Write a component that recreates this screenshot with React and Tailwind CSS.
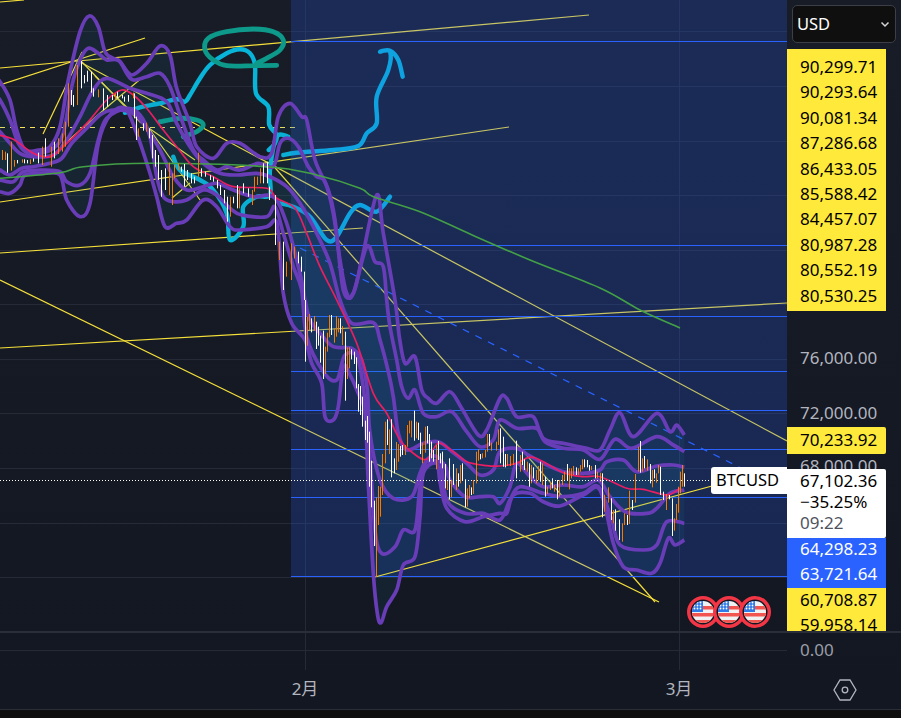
import React from "react";

// all chart data below was read off 3x crops, so each set keeps the crop origin it was read in
const crop = (ox, oy, pts) => pts.map(([x, y]) => [ox + x / 3, oy + y / 3]);
const A = (pts) => crop(0, 0, pts);
const B = (pts) => crop(280, 300, pts);
const C = (pts) => crop(500, 380, pts);

const smooth = (pts) => {
  let d = `M${pts[0][0].toFixed(1)} ${pts[0][1].toFixed(1)}`;
  for (let i = 0; i < pts.length - 1; i++) {
    const p0 = pts[i - 1] || pts[i];
    const p1 = pts[i];
    const p2 = pts[i + 1];
    const p3 = pts[i + 2] || p2;
    const c1 = [p1[0] + (p2[0] - p0[0]) / 6, p1[1] + (p2[1] - p0[1]) / 6];
    const c2 = [p2[0] - (p3[0] - p1[0]) / 6, p2[1] - (p3[1] - p1[1]) / 6];
    d += `C${c1[0].toFixed(1)} ${c1[1].toFixed(1)} ${c2[0].toFixed(1)} ${c2[1].toFixed(1)} ${p2[0].toFixed(1)} ${p2[1].toFixed(1)}`;
  }
  return d;
};

const u3 = [
  ...A([[-10, 240], [0, 245], [30, 300], [50, 390], [75, 450], [115, 450], [150, 440], [180, 380], [205, 240], [240, 95], [268, 48], [295, 80], [315, 155], [340, 175], [360, 185], [395, 225], [440, 190], [480, 138], [510, 165], [530, 265], [570, 370], [590, 440], [640, 475], [680, 430], [720, 430], [780, 470], [815, 460], [835, 350], [870, 310], [905, 350], [920, 360], [945, 480], [985, 570], [1005, 660], [1030, 870], [1060, 880], [1085, 780], [1130, 585], [1150, 700]]),
  ...B([[345, 0], [358, 110], [375, 190], [405, 170], [425, 270], [445, 295], [470, 310], [510, 275], [545, 325], [595, 405], [620, 390]]),
  ...C([[0, 55], [20, 55], [50, 110], [100, 110], [130, 175], [190, 190], [260, 205], [300, 210], [330, 150], [360, 98], [400, 170], [470, 100], [510, 155], [530, 135], [553, 165]]),
];
const u2 = [
  ...A([[-10, 295], [0, 300], [30, 360], [55, 430], [85, 460], [120, 460], [160, 445], [190, 400], [215, 260], [240, 180], [265, 145], [295, 160], [320, 180], [355, 180], [380, 220], [400, 240], [440, 230], [480, 220], [510, 260], [545, 360], [580, 450], [610, 480], [650, 510], [680, 500], [720, 510], [775, 490], [820, 500], [840, 430], [865, 415], [895, 440], [925, 500], [950, 530], [975, 545], [1000, 640], [1020, 780], [1040, 880], [1060, 880], [1100, 740], [1125, 785], [1150, 800]]),
  ...B([[320, 0], [330, 80], [350, 180], [365, 260], [385, 295], [405, 270], [430, 340], [470, 350], [515, 335], [560, 395], [600, 440], [640, 420]]),
  ...C([[0, 120], [50, 145], [110, 145], [135, 185], [190, 205], [250, 210], [300, 238], [345, 178], [395, 205], [470, 170], [520, 195], [553, 215]]),
];
const u1 = [
  ...A([[-10, 390], [0, 395], [30, 430], [60, 460], [100, 470], [160, 465], [200, 420], [240, 350], [280, 270], [320, 235], [390, 265], [440, 280], [500, 305], [530, 370], [570, 440], [610, 490], [660, 520], [710, 525], [770, 520], [810, 530], [860, 560], [900, 610], [950, 700], [990, 790], [1020, 900]]),
  ...B([[215, 70], [280, 68], [300, 120], [325, 215], [340, 290], [355, 400], [380, 450], [430, 430], [475, 425], [510, 450], [560, 490], [600, 525], [640, 510]]),
  ...C([[0, 215], [50, 205], [85, 225], [130, 250], [190, 275], [250, 280], [300, 270], [320, 245], [370, 240], [410, 275], [470, 258], [520, 255], [553, 262]]),
];
const l1 = [
  ...A([[-10, 505], [0, 510], [30, 525], [65, 505], [100, 500], [150, 490], [185, 475], [215, 430], [260, 385], [300, 345], [340, 330], [400, 340], [440, 385], [480, 450], [520, 530], [560, 570], [610, 560], [650, 550], [700, 570], [760, 590], [820, 590], [860, 670], [900, 820]]),
  ...B([[75, 0], [90, 60], [120, 100], [160, 140], [215, 145], [245, 180], [262, 270], [270, 400], [300, 540], [340, 595], [395, 590], [420, 520], [440, 485], [490, 490], [510, 540], [555, 590], [600, 590], [640, 590]]),
  ...C([[0, 370], [30, 320], [50, 250], [90, 290], [130, 320], [190, 315], [250, 320], [295, 300], [330, 350], [375, 395], [440, 400], [470, 385], [510, 340], [553, 330]]),
];
const l2 = [
  ...A([[-10, 535], [0, 540], [40, 545], [70, 515], [130, 510], [180, 515], [200, 545], [240, 555], [270, 520], [295, 420], [320, 355], [380, 325], [420, 345], [450, 410], [470, 530], [490, 590], [520, 605], [560, 600], [610, 570], [650, 585], [690, 625], [725, 645], [800, 650], [825, 620], [850, 700], [880, 800], [905, 870]]),
  ...B([[80, 110], [130, 215], [170, 240], [195, 165], [235, 180], [260, 350], [270, 470], [285, 690], [305, 760], [345, 740], [370, 690], [405, 690], [420, 560], [440, 480], [480, 480], [500, 600], [555, 640], [610, 640]]),
  ...C([[0, 420], [30, 360], [60, 320], [130, 340], [190, 350], [250, 340], [295, 320], [335, 420], [360, 495], [430, 510], [470, 495], [500, 425], [553, 430]]),
];
const l3 = [
  ...A([[-10, 570], [0, 575], [30, 580], [60, 555], [75, 525], [130, 520], [180, 525], [200, 600], [240, 650], [270, 610], [295, 430], [330, 345], [375, 325], [410, 400], [450, 520], [470, 590], [495, 680], [530, 670], [560, 660], [610, 600], [650, 620], [690, 680], [720, 690], [800, 680], [825, 660], [835, 700], [850, 880]]),
  ...B([[35, 70], [75, 120], [95, 190], [125, 250], [135, 350], [160, 360], [175, 320], [190, 200], [210, 225], [235, 280], [255, 340], [265, 550], [280, 820], [292, 940], [303, 968], [320, 920], [350, 870], [370, 795], [405, 770], [420, 650], [430, 520], [470, 490], [480, 545], [500, 625], [555, 665], [610, 650]]),
  ...C([[0, 400], [20, 400], [40, 345], [90, 340], [130, 365], [180, 378], [250, 345], [300, 330], [340, 490], [370, 560], [410, 570], [455, 580], [480, 550], [505, 475], [525, 495], [553, 480]]),
];

const red = [
  ...A([[-5, 405], [40, 418], [100, 460], [150, 470], [190, 440], [260, 370], [320, 300], [365, 270], [400, 285], [440, 325], [490, 390], [530, 440], [580, 500], [640, 530], [700, 560], [800, 565], [830, 595], [885, 625], [920, 700], [960, 800]]),
  ...B([[170, 0], [230, 130], [280, 280], [320, 340], [360, 420], [400, 460], [440, 478], [475, 430], [520, 455], [560, 485], [620, 497]]),
  ...C([[0, 258], [50, 250], [100, 232], [190, 278], [250, 290], [300, 290], [380, 325], [430, 328], [500, 345], [540, 325]]),
];
const green = [
  ...A([[0, 535], [180, 518], [250, 500], [450, 490], [800, 500], [950, 525], [1080, 565], [1120, 590], [1260, 635]]),
  [470, 234], [530, 260], [600, 288], [640, 310], [680, 328],
];
const cyanLines = [
  A([[375, 338], [420, 322], [470, 312], [530, 298], [555, 305], [570, 285], [600, 235], [630, 195], [680, 160], [720, 148], [750, 160], [765, 195], [768, 280], [805, 320], [808, 375], [830, 405], [825, 430], [806, 450]]),
  A([[850, 465], [890, 458], [1000, 450], [1075, 438], [1100, 400], [1130, 370], [1130, 290], [1165, 210], [1170, 155], [1140, 155], [1170, 152], [1195, 180], [1208, 230]]),
  A([[520, 470], [540, 510], [600, 540], [640, 570], [680, 640], [690, 720], [730, 680], [730, 620], [770, 590], [810, 585], [810, 510], [830, 410], [865, 410]]),
  A([[840, 610], [880, 620], [930, 650], [980, 720], [1010, 710], [1050, 640], [1080, 615], [1130, 635], [1170, 590]]),
];
const tealLines = [
  A([[830, 196], [765, 197], [680, 197], [640, 180], [615, 150], [625, 115], [680, 95], [760, 87], [820, 95], [850, 120], [840, 150], [800, 175], [770, 190]]),
  A([[480, 365], [540, 355], [590, 360], [610, 375], [590, 395], [550, 410]]),
];

const fib = [
  [[0, 68], [589, 15]],
  [[0, 2], [24, 0]],
  [[0, 85], [145, 38]],
  [[0, 202], [509, 127]],
  [[0, 253], [363, 228]],
  [[0, 348], [787, 303]],
  [[0, 280], [659, 602]],
  [[80, 62], [787, 441]],
  [[270, 162], [655, 602]],
  [[43, 134], [82, 52]],
  [[63, 145], [113, 102], [143, 77]],
  [[82, 62], [140, 122], [195, 160]],
  [[95, 76], [150, 130], [200, 200]],
  [[172, 198], [190, 183]],
];

const orange = "#f57c00";
// [x, top, bottom, 1 = orange]
const toBars = (ox, oy, rows) => rows.map(([x, a, b, o]) => [ox + x / 3, oy + a / 3, oy + b / 3, o]);
const bars = [
  ...toBars(0, 0, [[5, 450, 480, 1], [15, 455, 480, 1], [22, 460, 518], [32, 425, 512, 1], [42, 480, 500, 1], [50, 480, 490], [65, 478, 488, 1], [72, 478, 490], [80, 480, 490], [90, 478, 492, 1], [98, 475, 485], [115, 458, 490], [125, 440, 495, 1], [135, 415, 470], [152, 440, 500, 1], [162, 425, 475], [175, 415, 462, 1], [185, 400, 455, 1], [195, 365, 440, 1], [203, 250, 380, 1], [212, 270, 315], [220, 285, 320], [230, 195, 315, 1], [243, 183, 265], [252, 225, 250], [262, 212, 245], [272, 215, 278], [280, 265, 290], [295, 268, 292, 1], [310, 265, 330], [322, 285, 320], [335, 285, 300], [345, 280, 298, 1], [352, 275, 295], [365, 285, 295], [372, 290, 305], [385, 285, 305], [398, 278, 295, 1], [403, 280, 355], [408, 350, 420], [414, 385, 410, 1], [428, 370, 392], [438, 368, 395, 1], [446, 385, 415], [456, 405, 475], [465, 450, 500], [473, 465, 540], [483, 510, 590], [496, 505, 570], [507, 488, 585, 1], [516, 520, 615, 1], [522, 495, 535, 1], [534, 490, 510, 1], [543, 500, 515], [552, 492, 560], [562, 510, 540], [572, 520, 550], [582, 530, 550], [595, 458, 530, 1], [603, 505, 530], [615, 515, 530], [630, 525, 540], [640, 530, 545], [650, 540, 565], [660, 555, 585], [672, 570, 610], [680, 590, 665], [690, 590, 650, 1], [700, 590, 610], [710, 555, 625], [717, 565, 625, 1], [730, 550, 580], [745, 565, 590], [757, 570, 615, 1], [763, 530, 575, 1], [772, 530, 555, 1], [780, 505, 550, 1], [790, 490, 550], [800, 485, 550], [808, 560, 600], [826, 585, 735], [838, 725, 780, 1], [850, 725, 870], [858, 785, 830, 1], [872, 730, 840, 1], [882, 740, 775, 1], [893, 755, 790], [902, 770, 815], [912, 815, 900]]),
  ...toBars(280, 300, [[76, 0, 185], [82, 50, 137, 1], [88, 42, 90, 1], [94, 55, 97], [102, 48, 92, 1], [108, 65, 147], [114, 80, 137], [120, 107, 188], [130, 92, 237], [136, 140, 222, 1], [142, 98, 155, 1], [148, 45, 112, 1], [154, 45, 105], [163, 85, 128, 1], [169, 48, 110, 1], [175, 55, 97, 1], [181, 55, 100], [187, 78, 135, 1], [196, 95, 302], [202, 142, 237, 1], [208, 142, 205, 1], [214, 148, 178], [222, 155, 192], [228, 172, 265], [235, 252, 335], [241, 258, 345], [247, 290, 380], [256, 362, 420], [262, 348, 428], [268, 395, 560], [274, 482, 622], [283, 602, 738], [289, 592, 830, 1], [295, 558, 675, 1], [301, 560, 650, 1], [307, 462, 585, 1], [316, 365, 490, 1], [322, 358, 435], [328, 388, 462, 1], [334, 358, 532], [343, 475, 520], [349, 426, 510, 1], [355, 432, 485, 1], [361, 438, 470], [367, 435, 465], [376, 435, 465, 1], [382, 375, 440, 1], [388, 362, 400, 1], [394, 362, 412, 1], [403, 332, 422], [409, 365, 415, 1], [415, 368, 420], [421, 398, 462], [427, 428, 490, 1], [436, 380, 458, 1], [442, 378, 430], [448, 402, 485], [454, 425, 475], [460, 450, 485], [469, 435, 508, 1], [475, 423, 480], [481, 460, 490], [487, 455, 505], [496, 492, 565], [502, 540, 570, 1], [508, 475, 597], [514, 540, 592, 1], [520, 492, 555], [529, 505, 570, 1], [535, 520, 560], [541, 495, 550, 1], [547, 490, 540], [556, 538, 622], [562, 565, 620, 1], [568, 555, 595, 1], [574, 562, 585], [580, 540, 582, 1], [589, 455, 550, 1], [595, 448, 482, 1], [601, 462, 478], [607, 460, 475, 1], [616, 450, 472, 1], [622, 402, 455, 1], [628, 402, 438], [634, 428, 452, 1], [648, 425, 452, 1], [655, 388, 435, 1]]),
  ...toBars(500, 380, [[1, 145, 250], [8, 170, 260], [14, 222, 262], [22, 222, 258, 1], [30, 228, 258, 1], [38, 222, 255, 1], [48, 182, 295], [60, 225, 275, 1], [66, 215, 255], [72, 238, 270], [80, 245, 275, 1], [88, 250, 320], [94, 255, 310, 1], [100, 262, 295], [108, 270, 310, 1], [114, 258, 300, 1], [120, 245, 305], [126, 250, 315, 1], [134, 290, 350], [142, 320, 342, 1], [150, 305, 330, 1], [156, 295, 325], [162, 315, 335, 1], [170, 300, 358], [176, 300, 350, 1], [186, 285, 315, 1], [192, 275, 300, 1], [202, 252, 300], [208, 265, 328, 1], [214, 265, 295, 1], [220, 258, 285, 1], [228, 262, 285], [234, 265, 285, 1], [240, 255, 275, 1], [246, 238, 268, 1], [252, 238, 262], [262, 240, 262], [268, 255, 272], [274, 258, 270, 1], [286, 255, 295], [292, 275, 295, 1], [300, 278, 305, 1], [307, 280, 412], [313, 345, 395, 1], [323, 322, 368, 1], [333, 355, 420], [339, 390, 430, 1], [346, 388, 452], [356, 418, 480], [366, 430, 485, 1], [373, 400, 435, 1], [382, 405, 435], [388, 332, 432, 1], [396, 360, 390], [406, 282, 368, 1], [415, 200, 275, 1], [421, 183, 278], [427, 235, 275, 1], [433, 228, 265], [441, 238, 272, 1], [449, 252, 310], [455, 270, 322, 1], [461, 268, 295], [467, 280, 308, 1], [475, 255, 280, 1], [481, 260, 345], [489, 335, 360], [498, 342, 390, 1], [507, 345, 358], [515, 355, 468], [521, 415, 452, 1], [527, 372, 420, 1], [535, 320, 398, 1], [541, 275, 340, 1], [547, 255, 320, 1], [553, 280, 320]]),
];

const gridRows = [31, 86, 141, 195, 250, 304, 359, 413, 468, 523, 577];
const boxRows = [41, 245, 316, 371, 410, 449, 497, 576];

const poly = (pts) => pts.map((p) => p.join(",")).join(" ");

const UsFlag = () => (
  <svg width="32" height="32" viewBox="0 0 32 32" className="-ml-[6px]">
    <defs>
      <clipPath id="flagDisc">
        <circle cx="16" cy="16" r="11" />
      </clipPath>
    </defs>
    <circle cx="16" cy="16" r="14.25" fill="#131722" stroke="#f23645" strokeWidth="3.5" />
    <g clipPath="url(#flagDisc)">
      <rect x="4" y="4" width="24" height="24" fill="#f1f1f1" />
      <rect x="4" y="10" width="24" height="3.5" fill="#f25550" />
      <rect x="4" y="17" width="24" height="3.5" fill="#f25550" />
      <rect x="4" y="24" width="24" height="4" fill="#f25550" />
      <rect x="4" y="4" width="12" height="12" fill="#2f7be8" />
      {[6.5, 9.5, 12.5].map((y) =>
        [7.5, 10.5, 13.5].map((x) => <circle key={`${x}-${y}`} cx={x} cy={y} r="0.9" fill="#fff" />)
      )}
    </g>
  </svg>
);

const Chart = () => (
  <svg width="787" height="631" viewBox="0 0 787 631" className="block">
    <g stroke="#262a36" strokeWidth="1">
      {gridRows.map((y) => (
        <line key={y} x1="0" x2="787" y1={y + 0.5} y2={y + 0.5} />
      ))}
      <line x1="305.5" x2="305.5" y1="0" y2="631" />
      <line x1="679.5" x2="679.5" y1="0" y2="631" />
    </g>

    <g fill="none" stroke="#f5e03a" strokeWidth="1.2">
      {fib.map((l, i) => (
        <polyline key={i} points={poly(l)} />
      ))}
    </g>
    <line x1="0" x2="296" y1="127.5" y2="127.5" stroke="#f7e65a" strokeWidth="1" strokeDasharray="5 5" />

    <g fill="none" stroke="#08b4d8" strokeWidth="4.4" strokeLinecap="round" strokeLinejoin="round">
      {cyanLines.map((l, i) => (
        <path key={i} d={smooth(l)} />
      ))}
    </g>
    <g fill="none" stroke="#0d9a8a" strokeWidth="4.8" strokeLinecap="round" strokeLinejoin="round">
      {tealLines.map((l, i) => (
        <path key={i} d={smooth(l)} />
      ))}
    </g>

    <rect x="291" y="0" width="496" height="576" fill="#2962ff" fillOpacity="0.22" />
    <g stroke="#2962ff" strokeWidth="1">
      {boxRows.map((y) => (
        <line key={y} x1="291" x2="787" y1={y + 0.5} y2={y + 0.5} />
      ))}
    </g>
    <line x1="300" x2="745" y1="248" y2="470" stroke="#2962ff" strokeWidth="1.2" strokeDasharray="7 7" />
    <line x1="375" x2="712" y1="577" y2="486" stroke="#f5e03a" strokeWidth="1.2" />

    <polygon points={poly([...u3, ...[...l3].reverse()])} fill="#1f8fb0" fillOpacity="0.09" />
    <polygon points={poly([...u1, ...[...l1].reverse()])} fill="#1f8fb0" fillOpacity="0.08" />

    <g fill="none" stroke="#6a3db8" strokeWidth="3.7" strokeLinejoin="round">
      {[u3, u2, u1, l1, l2, l3].map((l, i) => (
        <path key={i} d={smooth(l)} />
      ))}
    </g>
    <path d={smooth(green)} fill="none" stroke="#43a047" strokeWidth="1.6" />
    <path d={smooth(red)} fill="none" stroke="#e91e63" strokeWidth="1.7" />

    {bars.map(([x, a, b, o], i) => (
      <rect key={i} x={Math.round(x)} y={a} width="1" height={b - a} fill={o ? orange : "#ffffff"} />
    ))}

    <line x1="0" x2="711" y1="480.5" y2="480.5" stroke="#ffffff" strokeWidth="1" strokeDasharray="1 2" />
  </svg>
);

const yellowRows = ["90,299.71", "90,293.64", "90,081.34", "87,286.68", "86,433.05", "85,588.42", "84,457.07", "80,987.28", "80,552.19", "80,530.25"];

const Row = ({ children, className = "" }) => (
  <div className={`pl-[13px] h-[25.4px] leading-[23.4px] ${className}`}>{children}</div>
);

export default function App() {
  return (
    <div className="w-[901px] h-[718px] bg-[#0e0e0e] text-[17px] overflow-hidden" style={{ fontFamily: "'Noto Sans', sans-serif" }}>
      <div className="flex h-[710px] border-b border-[#2a2e39] bg-gradient-to-b from-[#181c27] to-[#131722]">
        <div className="w-[787px] flex flex-col">
          <div className="relative h-[631px] overflow-hidden">
            <Chart />
            <div className="absolute left-[711px] top-[467px] w-[76px] h-[27px] bg-white rounded-l-[3px] text-black text-[16.5px] leading-[26px] pl-[5px]">
              BTCUSD
            </div>
            <div className="absolute left-[693px] top-[596px] flex">
              <UsFlag />
              <UsFlag />
              <UsFlag />
            </div>
          </div>
          <div className="h-[2px] bg-[#2a2e39]" />
          <svg width="787" height="37" className="block shrink-0">
            <line x1="0" x2="787" y1="17.5" y2="17.5" stroke="#262a36" />
            <line x1="305.5" x2="305.5" y1="0" y2="37" stroke="#262a36" />
            <line x1="679.5" x2="679.5" y1="0" y2="37" stroke="#262a36" />
          </svg>
          <div className="flex-1 flex items-center text-[#b2b5be] text-[17px] pl-[285px] pb-[2px]" style={{ fontFamily: "'Noto Sans', 'Noto Sans CJK JP', sans-serif" }}>
            <span className="w-[40px] text-center">2月</span>
            <span className="w-[40px] text-center ml-[334px]">3月</span>
          </div>
        </div>

        <div className="w-[114px] flex flex-col">
          <div className="h-[631px] overflow-hidden">
            <div className="mx-[5px] mt-[5px] h-[38px] flex items-center justify-between rounded-[5px] border border-[#3c3f47] bg-[#0f0f0f] text-white pl-[4px] pr-[4px] text-[16.5px]">
              <span>USD</span>
              <svg width="12" height="12" viewBox="0 0 12 12" fill="none" stroke="#d6d6d6" strokeWidth="1.5">
                <path d="M2.5 4.5 6 8l3.5-3.5" />
              </svg>
            </div>
            <div className="mt-[6px] w-[99px] bg-[#ffe93b] text-black">
              <div className="h-[6px]" />
              {yellowRows.map((v) => (
                <Row key={v}>{v}</Row>
              ))}
              <div className="h-[2px]" />
            </div>
            <Row className="mt-[35px] text-[#b2b5be]">76,000.00</Row>
            <Row className="mt-[30px] text-[#b2b5be]">72,000.00</Row>
            <div className="w-[99px] h-[27px] leading-[25px] pl-[13px] bg-[#ffe93b] text-black rounded-r-[2px]">70,233.92</div>
            <div className="h-[15px] overflow-hidden pl-[13px] text-[#b2b5be] leading-[23.4px]">68,000.00</div>
            <div className="w-[99px] h-[69px] bg-white pl-[13px] pt-[1px] leading-[21px] text-black rounded-r-[2px]">
              <div>67,102.36</div>
              <div>−35.25%</div>
              <div className="text-[#50535e]">09:22</div>
            </div>
            <div className="w-[99px] h-[50px] bg-[#2962ff] text-white pl-[13px] leading-[21px]">
              <div className="h-[25px]">64,298.23</div>
              <div className="h-[25px]">63,721.64</div>
            </div>
            <div className="w-[99px] h-[45px] overflow-hidden bg-[#ffe93b] text-black">
              <Row>60,708.87</Row>
              <Row>59,958.14</Row>
            </div>
          </div>
          <div className="h-[2px] bg-[#2a2e39]" />
          <div className="h-[37px] flex items-center pl-[13px] pb-[4px] text-[#9a9da6]">0.00</div>
          <div className="flex-1 flex items-center pl-[45px]">
            <svg width="26" height="24" viewBox="0 0 26 24" fill="none" stroke="#b2b5be" strokeWidth="1.3">
              <path d="M8 2h10l6 10-6 10H8L2 12z" />
              <circle cx="13" cy="12" r="2.8" />
            </svg>
          </div>
        </div>
      </div>
    </div>
  );
}
